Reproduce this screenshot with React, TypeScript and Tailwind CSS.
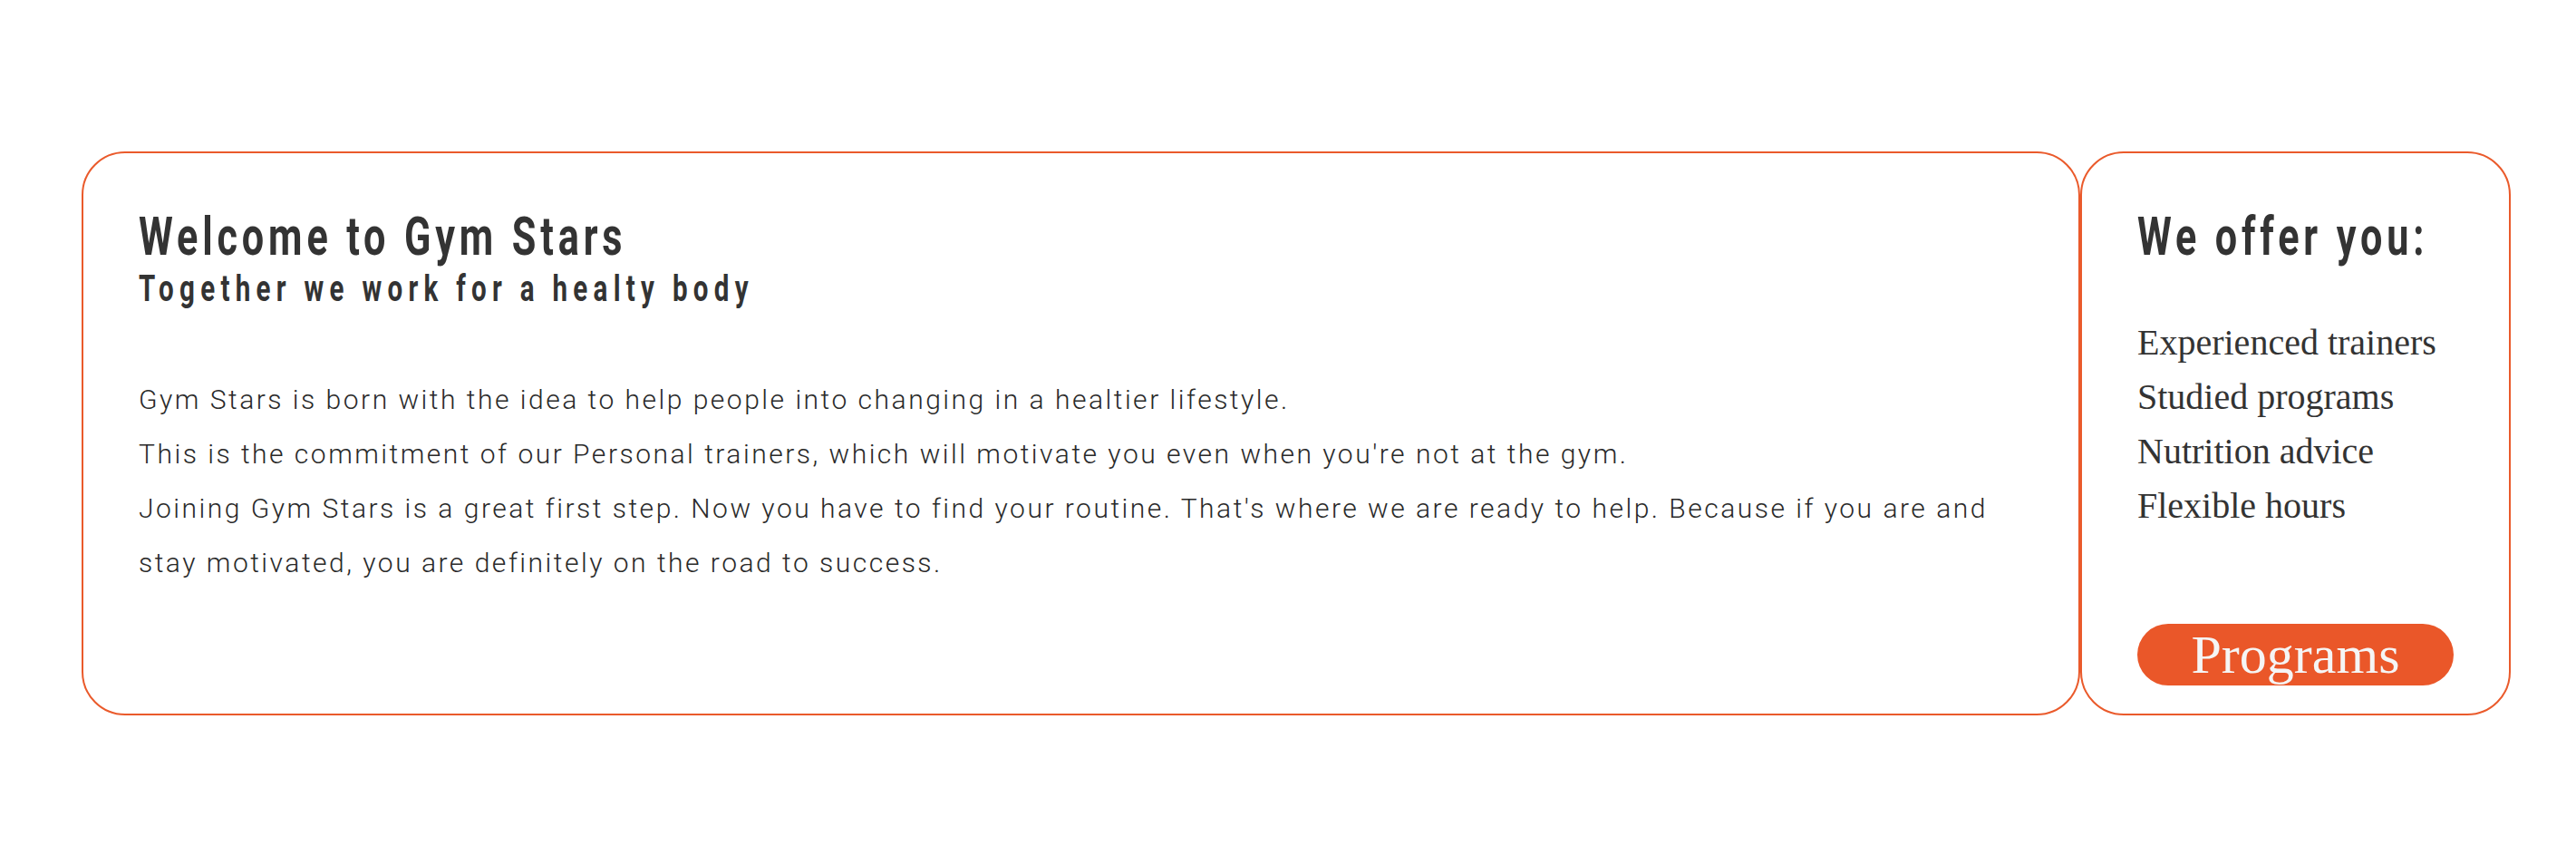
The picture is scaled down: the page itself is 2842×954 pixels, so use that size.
const OFFERS = [
  "Experienced trainers",
  "Studied programs",
  "Nutrition advice",
  "Flexible hours",
] as const;

// no condensed display face offline: squeeze Roboto bold to get the tall narrow look
const headFont =
  "origin-left scale-x-[0.72] whitespace-nowrap font-['Roboto',sans-serif] font-bold text-[#333]";

function WelcomeCard() {
  return (
    <section className="h-[622px] w-[2205px] shrink-0 rounded-[48px] border-2 border-[#ea5a2b] pl-[61px] pr-[40px] pt-[62px]">
      <h1 className={`${headFont} text-[60px] leading-[60px] tracking-[6.75px]`}>
        Welcome to Gym Stars
      </h1>
      <h2 className={`${headFont} mt-[7px] text-[41px] leading-[41px] tracking-[8.75px]`}>
        Together we work for a healty body
      </h2>
      <p className="mt-[72px] font-['Roboto',sans-serif] text-[30px] font-light leading-[60px] tracking-[2.5px] text-[#2a2a2a]">
        Gym Stars is born with the idea to help people into changing in a healtier lifestyle.
        <br />
        This is the commitment of our Personal trainers, which will motivate you even when you're not at the gym.
        <br />
        Joining Gym Stars is a great first step. Now you have to find your routine. That's where we are ready to help. Because if you are and
        <br />
        stay motivated, you are definitely on the road to success.
      </p>
    </section>
  );
}

function OfferCard() {
  return (
    <aside className="h-[622px] w-[475px] shrink-0 rounded-[48px] border-2 border-[#ea5a2b] pl-[61px] pt-[62px]">
      <h2 className={`${headFont} text-[60px] leading-[60px] tracking-[6.75px]`}>
        We offer you:
      </h2>
      <ul className="mt-[57px] font-['Liberation_Serif',serif] text-[40px] leading-[60px] text-[#333]">
        {OFFERS.map((item) => (
          <li key={item}>{item}</li>
        ))}
      </ul>
      <button
        type="button"
        className="mt-[100px] h-[68px] w-[349px] rounded-full bg-[#ea5729] font-['Liberation_Serif',serif] text-[60px] leading-[68px] text-[#f5f5f5]"
      >
        Programs
      </button>
    </aside>
  );
}

export default function App() {
  return (
    <main className="min-h-[954px] w-full bg-white pt-[167px]">
      <div className="ml-[90px] flex">
        <WelcomeCard />
        <OfferCard />
      </div>
    </main>
  );
}
